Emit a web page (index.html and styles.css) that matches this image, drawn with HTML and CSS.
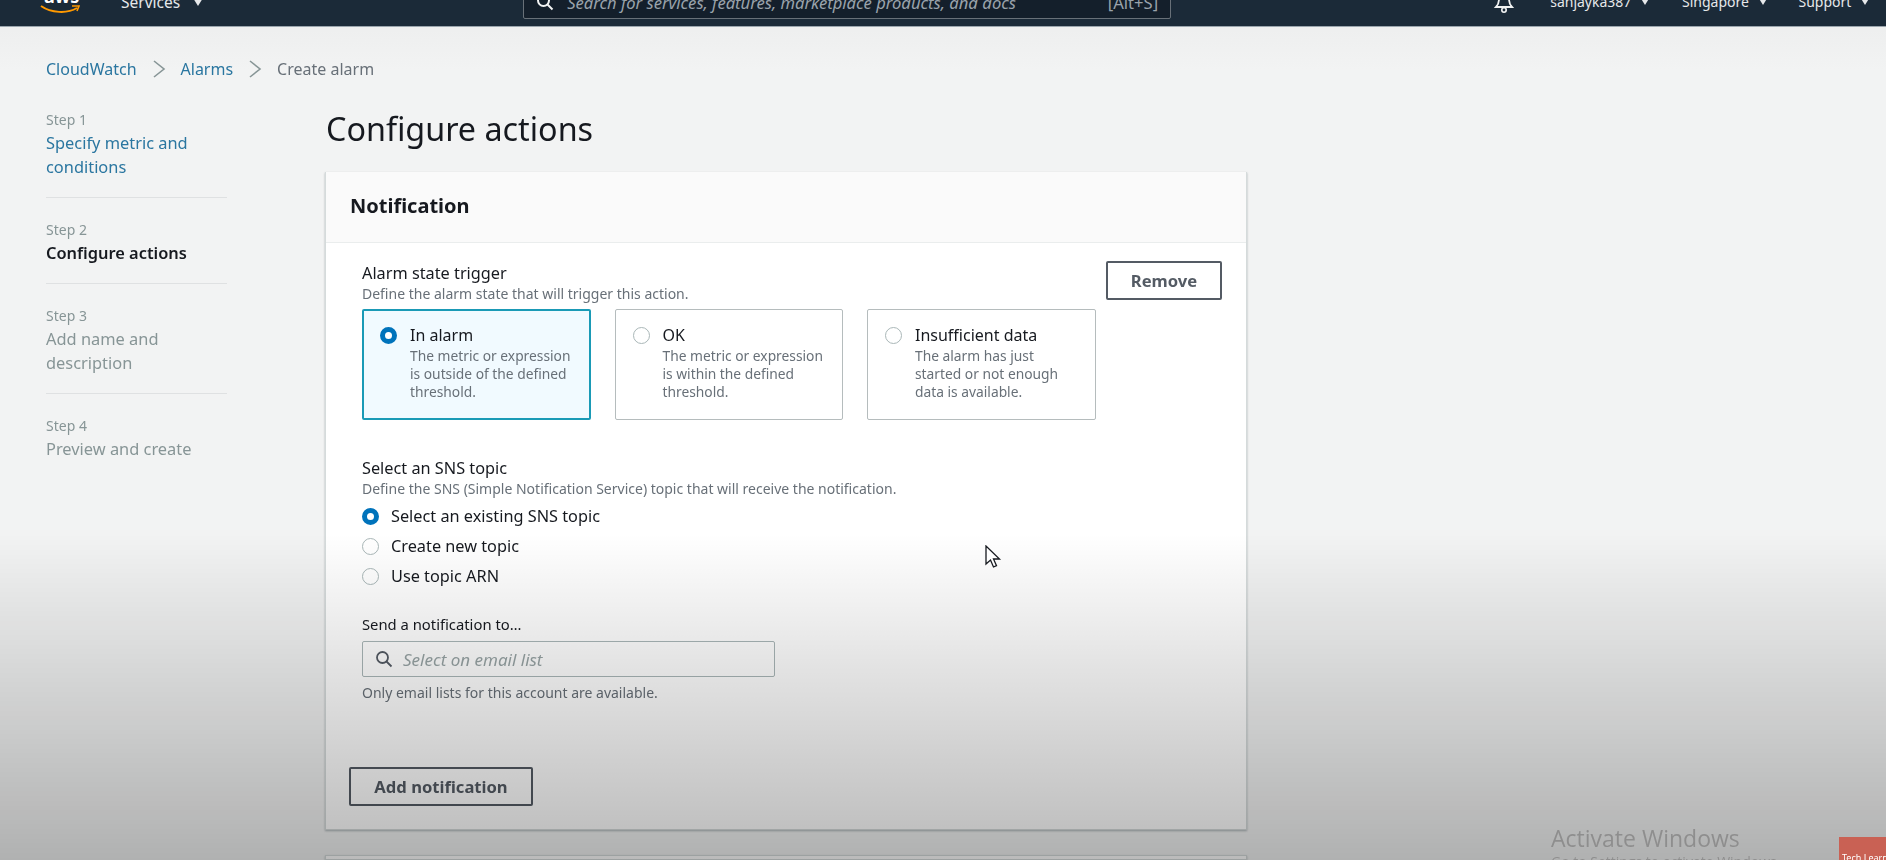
FILE: index.html
```html
<!DOCTYPE html>
<html lang="en">
<head>
  <meta charset="UTF-8">
  <meta name="viewport" content="width=device-width, initial-scale=1.0">
  <title>Configure actions</title>
  <link rel="stylesheet" href="styles.css">
</head>
<body>
  <header class="topbar">
    <div class="logo">
      <span class="logo-text">aws</span>
      <svg class="logo-smile" width="40" height="9" viewBox="0 0 40 9"><path d="M1 1c10 7 26 8 36 2" fill="none" stroke="#f90" stroke-width="2"/><path d="M32 1l7 0-2 5" fill="none" stroke="#f90" stroke-width="1.6"/></svg>
    </div>
    <div class="nav-item services">Services <span class="caret"></span></div>
    <div class="search">
      <svg class="search-icon" width="18" height="18" viewBox="0 0 18 18"><circle cx="7.5" cy="7.5" r="5.5" fill="none" stroke="#f2f3f3" stroke-width="2"/><path d="M11.5 11.5l5 5" stroke="#f2f3f3" stroke-width="2"/></svg>
      <span class="search-text">Search for services, features, marketplace products, and docs</span>
      <span class="search-key">[Alt+S]</span>
    </div>
    <svg class="bell" width="22" height="26" viewBox="0 0 22 26"><path d="M11 3c-4 0-5 4-5 8 0 4-1 6-3 8h16c-2-2-3-4-3-8 0-4-1-8-5-8z" fill="none" stroke="#f2f3f3" stroke-width="1.8"/><circle cx="11" cy="22" r="2.2" fill="none" stroke="#f2f3f3" stroke-width="1.6"/></svg>
    <div class="nav-item user">sanjayka387 <span class="caret"></span></div>
    <div class="nav-item region">Singapore <span class="caret"></span></div>
    <div class="nav-item support">Support <span class="caret"></span></div>
  </header>

  <nav class="breadcrumb">
    <a>CloudWatch</a>
    <svg width="14" height="20" viewBox="0 0 14 20"><path d="M2 2l10 8-10 8" fill="none" stroke="#879596" stroke-width="1.6"/></svg>
    <a>Alarms</a>
    <svg width="14" height="20" viewBox="0 0 14 20"><path d="M2 2l10 8-10 8" fill="none" stroke="#879596" stroke-width="1.6"/></svg>
    <span>Create alarm</span>
  </nav>

  <div class="layout">
    <aside class="steps">
      <div class="step">
        <small>Step 1</small>
        <a>Specify metric and conditions</a>
      </div>
      <div class="step">
        <small>Step 2</small>
        <b>Configure actions</b>
      </div>
      <div class="step">
        <small>Step 3</small>
        <span>Add name and description</span>
      </div>
      <div class="step">
        <small>Step 4</small>
        <span>Preview and create</span>
      </div>
    </aside>

    <main class="main">
      <h1>Configure actions</h1>
      <section class="card">
        <div class="card-head">Notification</div>
        <div class="card-body">
          <div class="trigger-row">
            <div class="trigger">
              <div class="label">Alarm state trigger</div>
              <div class="hint">Define the alarm state that will trigger this action.</div>
              <div class="tiles">
                <div class="tile selected">
                  <span class="radio on"></span>
                  <div>
                    <div class="tile-title">In alarm</div>
                    <div class="tile-text">The metric or expression is outside of the defined threshold.</div>
                  </div>
                </div>
                <div class="tile">
                  <span class="radio"></span>
                  <div>
                    <div class="tile-title">OK</div>
                    <div class="tile-text">The metric or expression is within the defined threshold.</div>
                  </div>
                </div>
                <div class="tile">
                  <span class="radio"></span>
                  <div>
                    <div class="tile-title">Insufficient data</div>
                    <div class="tile-text">The alarm has just started or not enough data is available.</div>
                  </div>
                </div>
              </div>
            </div>
            <button class="btn remove">Remove</button>
          </div>

          <div class="label sns-label">Select an SNS topic</div>
          <div class="hint">Define the SNS (Simple Notification Service) topic that will receive the notification.</div>
          <div class="radios">
            <div class="radio-row"><span class="radio on"></span>Select an existing SNS topic</div>
            <div class="radio-row"><span class="radio"></span>Create new topic</div>
            <div class="radio-row"><span class="radio"></span>Use topic ARN</div>
          </div>

          <div class="label send-label">Send a notification to…</div>
          <div class="select">
            <svg width="18" height="18" viewBox="0 0 18 18"><circle cx="7.5" cy="7.5" r="5.5" fill="none" stroke="#545b64" stroke-width="1.8"/><path d="M11.5 11.5l5 5" stroke="#545b64" stroke-width="1.8"/></svg>
            <span>Select on email list</span>
          </div>
          <div class="hint help">Only email lists for this account are available.</div>
        </div>
        <button class="btn add">Add notification</button>
      </section>
      <section class="card next"></section>
    </main>
  </div>

  <div class="shade"></div>
  <svg class="cursor" width="18" height="24" viewBox="0 0 18 24"><path d="M2 1v18l4.500-4 3 7 3-1.300-3-6.700h6z" fill="#fff" stroke="#16191f" stroke-width="1.300"/></svg>
  <div class="activate">
    <div class="activate-title">Activate Windows</div>
    <div class="activate-sub">Go to Settings to activate Windows.</div>
  </div>
  <div class="badge">Tech Learning</div>
</body>
</html>
```

FILE: styles.css
```css
* { box-sizing: border-box; }
html, body { margin: 0; height: 860px; overflow: hidden; }
body { position: relative; background: linear-gradient(#ebecec, #f2f3f3 70px); color: #16191f; font-family: "Noto Sans", Arial, sans-serif; font-size: 16px; filter: blur(.35px); }
a { color: #2a76a0; }

.topbar { display: flex; align-items: flex-end; height: 27px; overflow: hidden; background: #1b2a38; border-bottom: 1px solid #9aa5ad; color: #e6e8ea; }
.logo { position: relative; flex: none; width: 44px; height: 30px; margin: 0 0 12px 37px; }
.logo-text { position: absolute; left: 7px; bottom: 8px; font-weight: 700; font-size: 18px; line-height: 20px; color: #fff; }
.logo-smile { position: absolute; left: 3px; bottom: 0; }
.nav-item { font-size: 14px; line-height: 20px; margin-bottom: 14px; white-space: nowrap; }
.caret { display: inline-block; width: 0; height: 0; margin-left: 5px; border: 5px solid transparent; border-top: 8px solid #e6e8ea; border-bottom: 0; vertical-align: 2px; }
.services { margin-left: 40px; font-size: 15.5px; }
.services .caret { margin-left: 9px; }
.search { display: flex; align-items: center; flex: none; width: 648px; height: 34px; margin: 0 0 7px 320px; padding: 0 12px; background: #141f2b; border: 1px solid #687078; border-radius: 2px; font-size: 16.6px; }
.search-icon { flex: none; margin-right: 13px; }
.search-text { flex: 1; font-style: italic; color: #9aa3ab; white-space: nowrap; }
.search-key { color: #9aa3ab; }
.bell { flex: none; margin: 0 0 12px 322px; }
.user { margin-left: 35px; }
.region { margin-left: 32px; }
.support { margin-left: 31px; }

.breadcrumb { display: flex; align-items: center; gap: 15px; height: 24px; margin: 30px 0 0 46px; font-size: 16px; color: #687078; }

.layout { display: flex; }
.steps { flex: none; width: 181px; margin: 27px 0 0 46px; }
.step { padding-bottom: 18px; margin-bottom: 20px; border-bottom: 1px solid #dfe1e2; line-height: 24px; color: #879596; }
.step:last-child { border-bottom: 0; }
.step small { display: block; font-size: 14px; line-height: 23px; color: #879596; }
.step a, .step b, .step span { display: block; font-size: 16.4px; }
.step b { font-weight: 600; color: #16191f; }

.main { width: 921px; margin-left: 99px; }
h1 { margin: 25px 0 0; font-size: 32.3px; font-weight: 400; line-height: 44px; color: #16191f; }
.card { margin-top: 22px; margin-left: -1px; background: #fff; border: 1px solid #d5dbdb; border-top: 0; box-shadow: 0 1px 2px rgba(0, 28, 36, .3); height: 658px; }
.card-head { height: 71px; padding: 0 24px; background: #fafafa; border-bottom: 1px solid #eaeded; font-size: 20px; font-weight: 700; line-height: 68px; }
.card-body { padding: 18px 24px 0 36px; }
.trigger-row { display: flex; justify-content: space-between; }
.label { font-size: 16.3px; line-height: 24px; color: #16191f; }
.hint { font-size: 14px; line-height: 17px; color: #687078; }
.tiles { display: flex; gap: 24px; margin-top: 7px; }
.tile { display: flex; gap: 13px; width: 228.5px; height: 111px; padding: 14px 16px 0 17px; background: #fff; border: 1px solid #b5bcbd; border-radius: 2px; }
.tile.selected { background: #f1faff; border: 2px solid #1a9ab6; padding: 13px 15px 0 16px; }
.tile-title { font-size: 16px; line-height: 22px; color: #16191f; }
.tile-text { margin-top: 1px; font-size: 13.8px; line-height: 18px; color: #687078; }
.radio { display: inline-block; flex: none; width: 17px; height: 17px; margin-top: 3px; background: #fff; border: 1px solid #aab7b8; border-radius: 50%; }
.radio.on { border: 5px solid #0073bb; }
.btn { height: 39px; background: transparent; border: 2px solid #545b64; border-radius: 2px; font: 700 16.6px "Noto Sans", Arial, sans-serif; color: #545b64; }
.remove { flex: none; width: 116px; margin-top: 0; background: #fff; }
.sns-label { margin-top: 36px; }
.radios { margin-top: 4px; }
.radio-row { display: flex; align-items: center; gap: 12px; height: 30px; font-size: 16.3px; color: #16191f; }
.radio-row .radio { margin-top: 0; }
.send-label { margin-top: 21px; font-size: 14.8px; }
.select { display: flex; align-items: center; gap: 10px; width: 413px; height: 36px; margin-top: 5px; padding: 0 12px; background: #fff; border: 1px solid #aab7b8; border-radius: 2px; font-size: 17px; font-style: italic; color: #98a4a5; }
.help { margin-top: 7px; }
.add { display: block; width: 184px; margin: 66px 0 0 23px; }
.next { height: 5px; margin-top: 25px; border-top: 1px solid #d5dbdb; }

.shade { position: absolute; inset: 0; background: linear-gradient(rgba(0, 0, 0, 0) 62%, rgba(0, 0, 0, .27)); pointer-events: none; }
.cursor { position: absolute; left: 984px; top: 545px; }
.activate { position: absolute; left: 1551px; top: 823px; color: #8e8e8e; font-family: "Open Sans", Arial, sans-serif; white-space: nowrap; }
.activate-title { font-size: 23px; line-height: 30px; }
.activate-sub { font-size: 14px; line-height: 18px; }
.badge { position: absolute; left: 1839px; top: 837px; width: 47px; height: 23px; padding: 16px 0 0 3px; overflow: hidden; background: #c96154; color: #fff; font-size: 9px; line-height: 9px; white-space: nowrap; }
```
